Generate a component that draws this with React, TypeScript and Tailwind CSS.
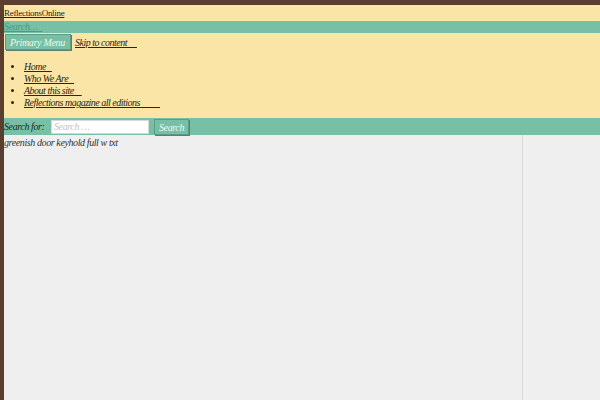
import React from "react";

export default function App() {
  const serif = { fontFamily: '"Liberation Serif", "DejaVu Serif", serif' };
  return (
    <div className="w-[600px] h-[400px] overflow-hidden bg-[#5b3f2e] pl-[4px] pt-[5px] text-[#2e2516]" style={serif}>
      <div className="flex h-[395px] flex-col bg-[#efefef]">
        <div className="h-[16px] bg-[#fbe5a6] pt-[3px] text-[9px] leading-[10px] tracking-[-0.3px]">
          <a className="underline text-[#2b2418]">ReflectionsOnline</a>
        </div>
        <div className="h-[12px] bg-[#77c0a6] text-[10px] leading-[12px] italic tracking-[-0.3px]">
          <a className="underline text-[#4a9a82]">Search…&nbsp;&nbsp;</a>
        </div>
        <div className="bg-[#fbe5a6] pb-[9px] pt-[1px] text-[10px] italic tracking-[-0.5px]">
          <div className="flex items-center gap-[4px] pl-[1px]">
            <button className="h-[16px] w-[66px] border border-[#5f9c87] bg-[#77c0a6] text-left pl-[4px] text-[10px] italic text-[#f4f4e8] shadow-[1px_1px_0_#5c7f70] tracking-[-0.3px]">Primary Menu</button>
            <a className="underline">Skip to content&nbsp;&nbsp;&nbsp;&nbsp;&nbsp;</a>
          </div>
          <ul className="mt-[11px] list-disc pl-[20px] leading-[12px]">
            <li><a className="underline">Home&nbsp;&nbsp;&nbsp;</a></li>
            <li><a className="underline">Who We Are&nbsp;&nbsp;&nbsp;</a></li>
            <li><a className="underline">About this site&nbsp;&nbsp;&nbsp;&nbsp;</a></li>
            <li><a className="underline">Reflections magazine all editions&nbsp;&nbsp;&nbsp;&nbsp;&nbsp;&nbsp;&nbsp;&nbsp;&nbsp;&nbsp;</a></li>
          </ul>
        </div>
        <div className="flex h-[17px] items-center bg-[#77c0a6] text-[10px] italic tracking-[-0.4px]">
          <span className="w-[47px] shrink-0 text-[#2b2418]">Search for:</span>
          <div className="h-[14px] w-[98px] border border-[#d8d8d8] bg-white pl-[2px] text-[10px] leading-[12px] text-[#c4c4c4]">Search …</div>
          <button className="ml-[5px] h-[16px] w-[35px] border border-[#5f9c87] bg-[#77c0a6] text-[10px] italic text-[#eef5ef] shadow-[1px_1px_0_#5c7f70]">Search</button>
        </div>
        <div className="flex flex-1">
          <div className="w-[519px] border-r border-[#dadada] pt-[2px] text-[10px] italic leading-[12px] text-[#333] tracking-[-0.4px]">
            greenish door keyhold full w txt
          </div>
          <div className="flex-1" />
        </div>
      </div>
    </div>
  );
}
